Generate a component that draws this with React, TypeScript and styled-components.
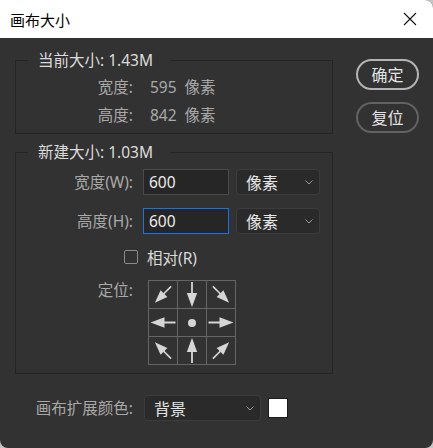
import React from 'react'
import styled, { createGlobalStyle } from 'styled-components'

const GlobalStyle = createGlobalStyle`
  html, body {
    margin: 0;
    padding: 0;
    background: #c4c4c4;
  }
  body {
    font-family: "Noto Sans", "Noto Sans CJK SC", sans-serif;
  }
`

export const Window = styled.div`
  width: 433px;
  height: 448px;
  background: #323232;
  border-radius: 0 8px 8px 8px;
  overflow: hidden;
  display: flex;
  flex-direction: column;
`

export const TitleBar = styled.div`
  height: 38px;
  flex-shrink: 0;
  background: #fff;
  color: #000;
  display: flex;
  align-items: center;
  justify-content: space-between;
  padding: 0 16px 0 10px;
  font-size: 15px;
`

export const Body = styled.div`
  display: flex;
  gap: 23px;
  padding: 12px 14px 0 15px;
`

export const LeftColumn = styled.div`
  width: 318px;
  display: flex;
  flex-direction: column;
`

export const RightColumn = styled.div`
  width: 63px;
  padding-top: 9px;
  display: flex;
  flex-direction: column;
  gap: 12px;
`

export const Button = styled.button<{ primary?: boolean }>`
  width: 63px;
  height: 31px;
  border-radius: 16px;
  background: transparent;
  border: 2px solid ${p => (p.primary ? '#b4b4b4' : '#626262')};
  color: #e4e4e4;
  font-family: inherit;
  font-size: 16px;
  line-height: 1;
  padding: 0;
`

export const Group = styled.fieldset<{ spaced?: boolean }>`
  margin: ${p => (p.spaced ? '8px' : '0')} 0 0 0;
  padding: 7px 0 8px 0;
  min-width: 0;
  border: 1px solid #242424;
`

export const Legend = styled.legend`
  margin-left: 12px;
  padding: 0 17px 0 10px;
  line-height: 20px;
  font-size: 15.5px;
  color: #dcdcdc;
`

export const Stack = styled.div<{ gap: number }>`
  display: flex;
  flex-direction: column;
  gap: ${p => p.gap}px;
`

export const Row = styled.div<{ top?: boolean }>`
  display: flex;
  align-items: ${p => (p.top ? 'flex-start' : 'center')};
  min-height: 20px;
`

export const Label = styled.div<{ width?: number }>`
  width: ${p => p.width ?? 117}px;
  flex-shrink: 0;
  text-align: right;
  font-size: 15.5px;
  line-height: 20px;
  color: #a9a9a9;
`

export const InfoValue = styled.div`
  margin-left: 17px;
  display: flex;
  gap: 8px;
  font-size: 15.5px;
  line-height: 20px;
  color: #a9a9a9;
`

export const Input = styled.div<{ focused?: boolean }>`
  margin-left: 10px;
  width: 86px;
  height: 26px;
  box-sizing: border-box;
  background: #262626;
  border: 1px solid ${p => (p.focused ? '#1a73e0' : '#4a4a4a')};
  color: #ececec;
  font-size: 15.5px;
  display: flex;
  align-items: center;
  padding-left: 5px;
`

export const Select = styled.div<{ width: number; gapLeft: number }>`
  margin-left: ${p => p.gapLeft}px;
  width: ${p => p.width}px;
  height: 26px;
  box-sizing: border-box;
  background: #2a2a2a;
  border: 1px solid #3c3c3c;
  border-radius: 4px;
  color: #e6e6e6;
  font-size: 16px;
  display: flex;
  align-items: center;
  justify-content: space-between;
  padding: 0 6px 0 9px;
`

export const CheckRow = styled.label`
  display: flex;
  align-items: center;
  gap: 9px;
  height: 20px;
  padding-left: 108px;
  font-size: 15.5px;
  color: #dadada;
`

export const CheckBox = styled.span`
  width: 14px;
  height: 14px;
  box-sizing: border-box;
  border: 1px solid #8a8a8a;
  border-radius: 2px;
`

export const AnchorGrid = styled.div`
  margin-left: 15px;
  display: grid;
  grid-template-columns: repeat(3, 28px);
  grid-template-rows: repeat(3, 27px);
  gap: 1px;
  padding: 1px;
  background: #666;
`

export const AnchorCell = styled.div`
  background: #323232;
  display: flex;
  align-items: center;
  justify-content: center;
`

export const Dot = styled.span`
  width: 8px;
  height: 8px;
  border-radius: 50%;
  background: #d4d4d4;
`

export const BottomRow = styled.div`
  display: flex;
  align-items: center;
  margin-top: 21px;
`

export const Swatch = styled.div`
  margin-left: 7px;
  width: 20px;
  height: 20px;
  box-sizing: border-box;
  background: #fff;
  border: 1px solid #1c1c1c;
`

const CloseIcon = () => (
  <svg width="14" height="14" viewBox="0 0 14 14">
    <path d="M1 1L13 13M13 1L1 13" stroke="#111" strokeWidth="1.1" fill="none" />
  </svg>
)

const Chevron = () => (
  <svg width="8" height="5" viewBox="0 0 8 5">
    <path d="M0.5 0.5L4 4L7.5 0.5" stroke="#9a9a9a" strokeWidth="1" fill="none" />
  </svg>
)

// base arrow points right; rotated per cell
const Arrow = ({ angle, diagonal }: { angle: number; diagonal?: boolean }) => (
  <svg width="28" height="27" viewBox="0 0.5 28 27">
    <g transform={`rotate(${angle} 14 14)${diagonal ? ' translate(14 14) scale(0.92) translate(-14 -14)' : ''}`}>
      <line x1="1.5" y1="14" x2="14" y2="14" stroke="#d6d6d6" strokeWidth="1.8" />
      <polygon points="12.5,8.8 26.5,14 12.5,19.2" fill="#d6d6d6" />
    </g>
  </svg>
)

const anchors: Array<{ angle?: number; diagonal?: boolean }> = [
  { angle: 135, diagonal: true },
  { angle: 90 },
  { angle: 45, diagonal: true },
  { angle: 180 },
  {},
  { angle: 0 },
  { angle: 225, diagonal: true },
  { angle: 270 },
  { angle: 315, diagonal: true },
]

export default function App() {
  return (
    <>
      <GlobalStyle />
      <Window>
        <TitleBar>
          <span>画布大小</span>
          <CloseIcon />
        </TitleBar>
        <Body>
          <LeftColumn>
            <Group>
              <Legend>当前大小: 1.43M</Legend>
              <Stack gap={8}>
                <Row>
                  <Label>宽度:</Label>
                  <InfoValue>
                    <span>595</span>
                    <span>像素</span>
                  </InfoValue>
                </Row>
                <Row>
                  <Label>高度:</Label>
                  <InfoValue>
                    <span>842</span>
                    <span>像素</span>
                  </InfoValue>
                </Row>
              </Stack>
            </Group>

            <Group spaced>
              <Legend>新建大小: 1.03M</Legend>
              <Stack gap={13}>
                <Row>
                  <Label>宽度(W):</Label>
                  <Input>600</Input>
                  <Select width={84} gapLeft={7}>
                    <span>像素</span>
                    <Chevron />
                  </Select>
                </Row>
                <Row>
                  <Label>高度(H):</Label>
                  <Input focused>600</Input>
                  <Select width={84} gapLeft={7}>
                    <span>像素</span>
                    <Chevron />
                  </Select>
                </Row>
                <CheckRow>
                  <CheckBox />
                  <span>相对(R)</span>
                </CheckRow>
                <Row top>
                  <Label>定位:</Label>
                  <AnchorGrid>
                    {anchors.map((a, i) => (
                      <AnchorCell key={i}>
                        {a.angle === undefined ? <Dot /> : <Arrow angle={a.angle} diagonal={a.diagonal} />}
                      </AnchorCell>
                    ))}
                  </AnchorGrid>
                </Row>
              </Stack>
            </Group>

            <BottomRow>
              <Label width={118}>画布扩展颜色:</Label>
              <Select width={117} gapLeft={11}>
                <span>背景</span>
                <Chevron />
              </Select>
              <Swatch />
            </BottomRow>
          </LeftColumn>
          <RightColumn>
            <Button primary>确定</Button>
            <Button>复位</Button>
          </RightColumn>
        </Body>
      </Window>
    </>
  )
}
